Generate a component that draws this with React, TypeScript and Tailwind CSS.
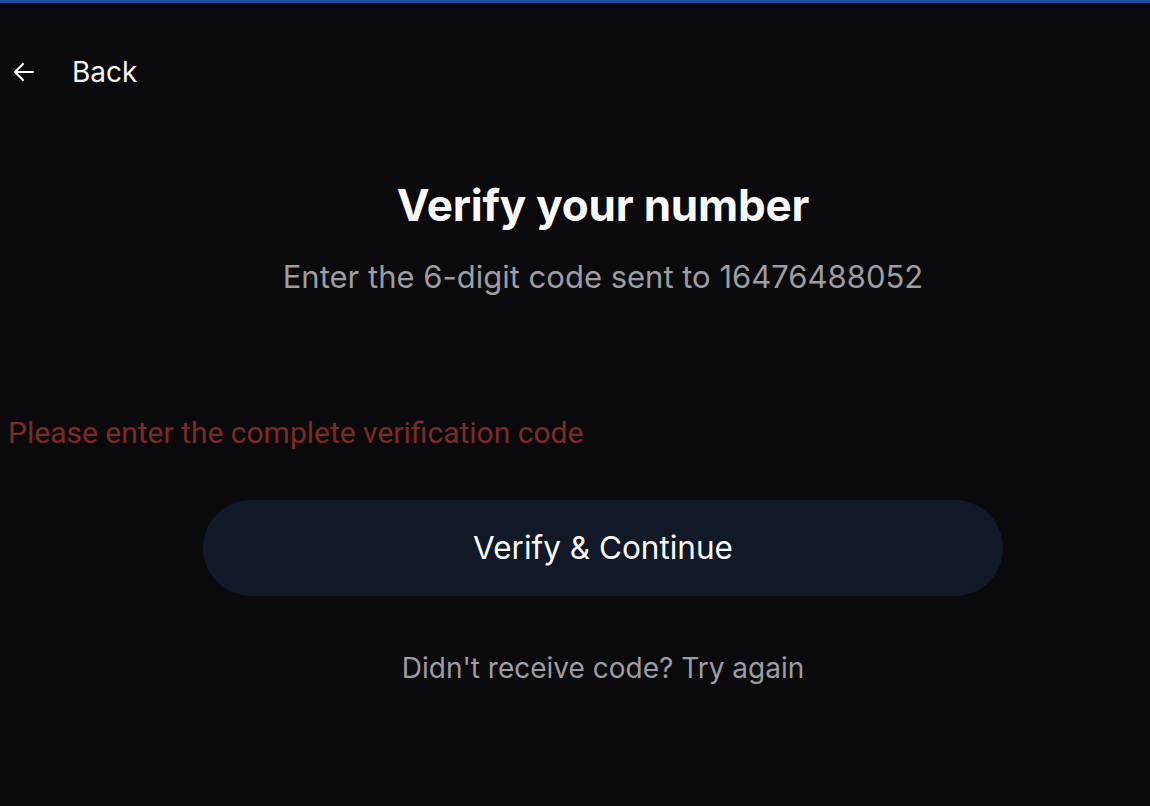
import React from "react";

export default function App() {
  return (
    <div
      className="w-[1150px] h-[806px] bg-[#0a0a0c] overflow-hidden relative"
      style={{ fontFamily: "Inter, 'Noto Sans', sans-serif" }}
    >
      <div className="h-[3px] bg-[#1f4fa3]" />
      <div className="flex items-center h-[60px] mt-[39px] pl-[12px]">
        <svg width="24" height="24" viewBox="0 0 24 24" fill="none" stroke="#fafafa" strokeWidth="2.2" strokeLinecap="round" strokeLinejoin="round">
          <path d="M21 12H3" />
          <path d="M11 4l-8 8 8 8" />
        </svg>
        <span className="ml-[36px] text-[28px] text-[#fafafa] leading-none">Back</span>
      </div>
      <div className="flex flex-col items-center pl-[56px]">
        <h1 className="mt-[75px] text-[44px] font-bold text-[#fafafa] leading-[56px] tracking-[-0.2px]">
          Verify your number
        </h1>
        <p className="mt-[26px] text-[31px] text-[#9d9ca2] leading-[36px]">
          Enter the 6-digit code sent to 16476488052
        </p>
      </div>
      <p
        className="mt-[120px] ml-[8px] text-[30px] text-[#7d2a25] leading-[36px]"
        style={{ fontFamily: "Roboto, sans-serif" }}
      >
        Please enter the complete verification code
      </p>
      <div className="flex flex-col items-center pl-[56px]">
        <button className="mt-[49px] w-[800px] h-[96px] rounded-full bg-[#111827] text-[#fafafa] text-[31.5px]">
          Verify &amp; Continue
        </button>
        <p className="mt-[54px] text-[28px] text-[#9d9ca2] leading-[36px]">
          Didn't receive code? Try again
        </p>
      </div>
    </div>
  );
}
